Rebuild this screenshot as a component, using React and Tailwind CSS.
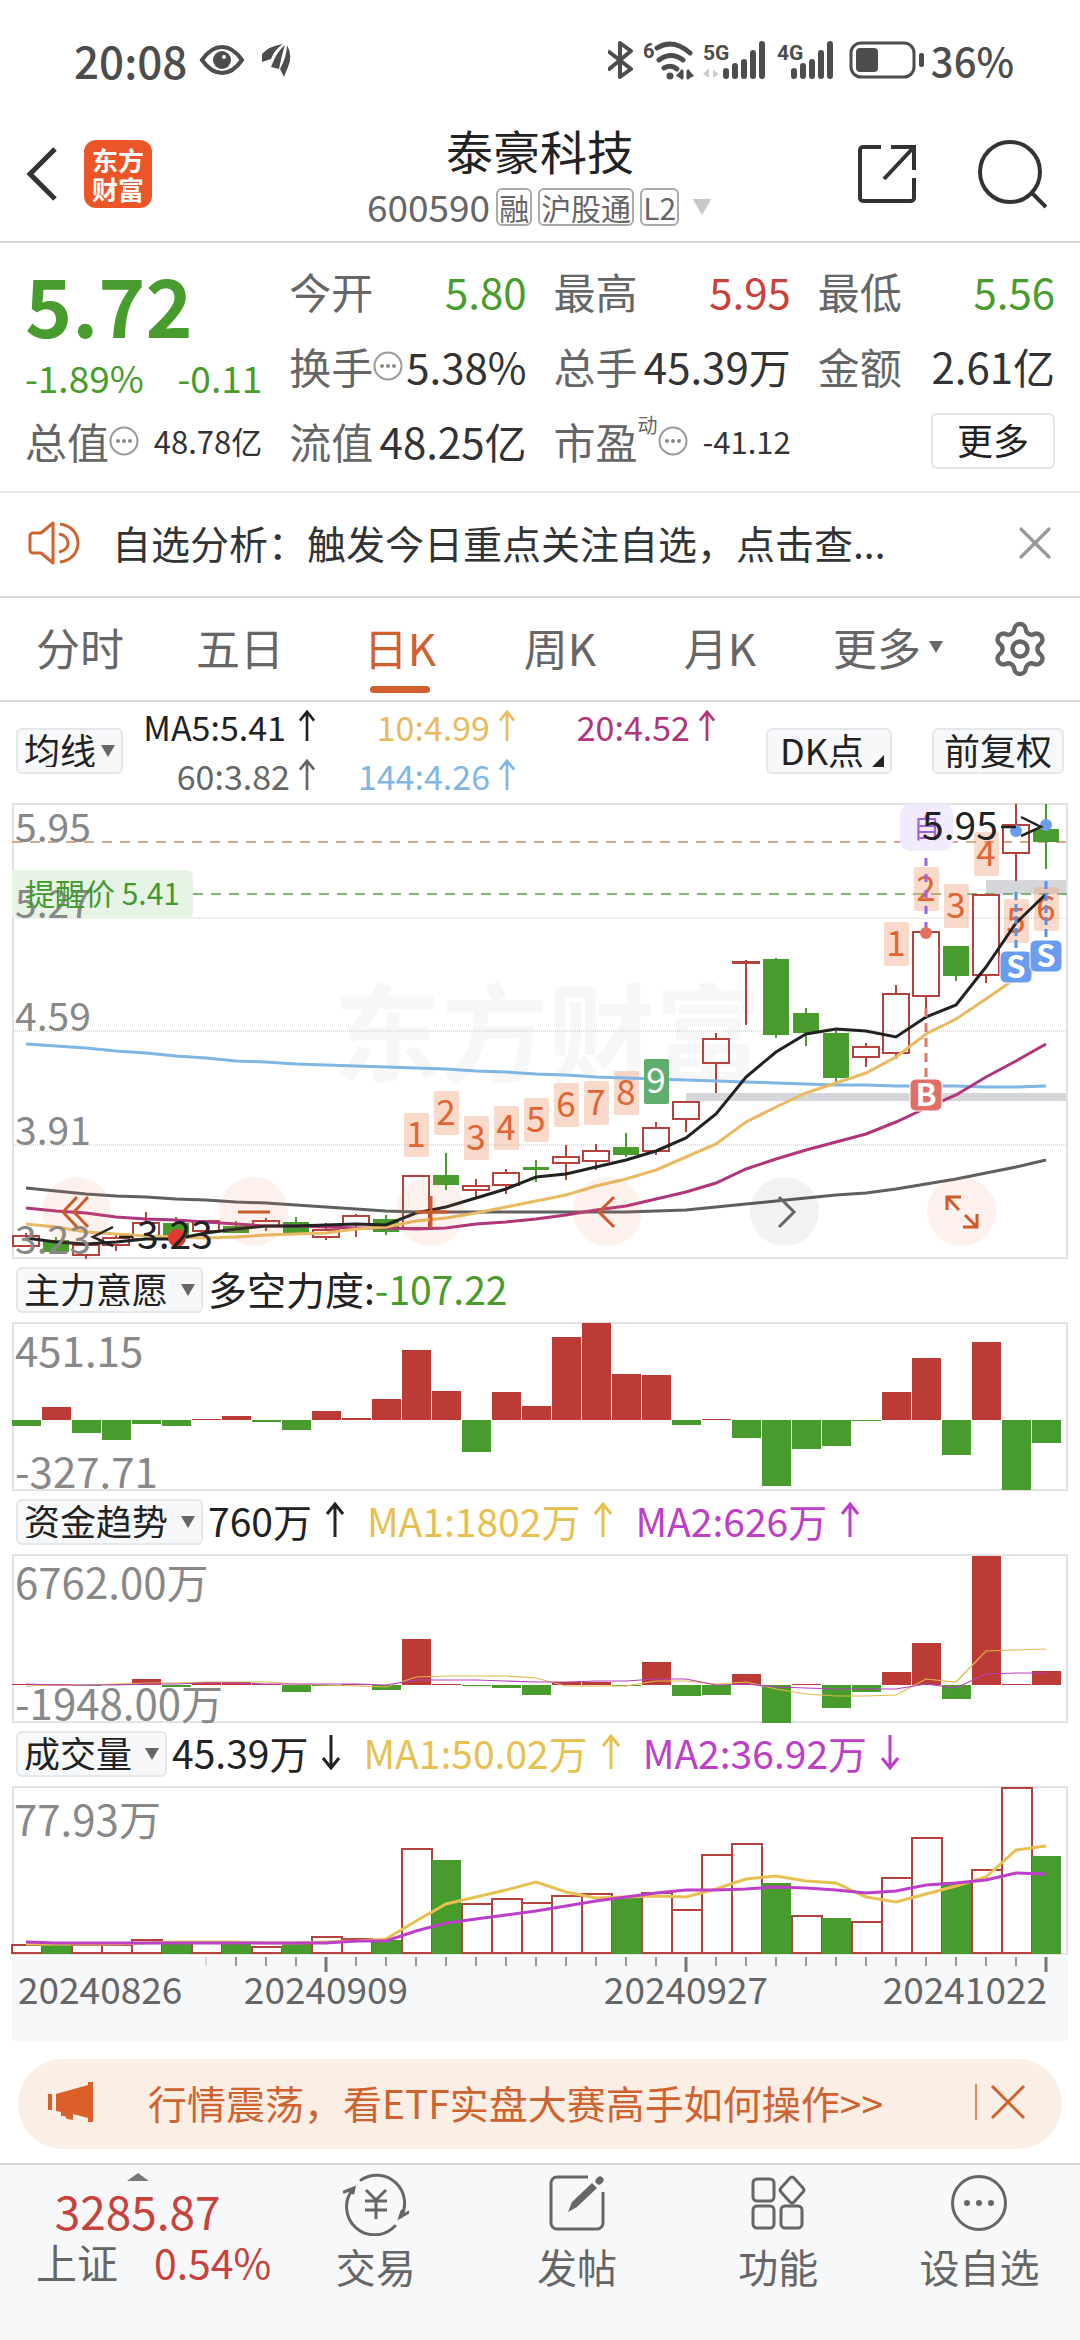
import React from 'react';
import { Settings, X } from 'lucide-react';

// [high, body top, body bottom, low, rising]
const candles = [
    [430, 432, 444, 444, 1], [434, 437, 449, 449, 0], [441, 441, 453, 456, 1], [430, 434, 443, 448, 1],
    [409, 419, 437, 437, 1], [414, 420, 434, 436, 0], [417, 417, 429, 432, 1], [418, 423, 430, 430, 0],
    [415, 417, 424, 428, 1], [414, 419, 430, 432, 0], [420, 426, 435, 437, 1], [411, 412, 422, 434, 1],
    [412, 416, 429, 432, 0], [372, 372, 426, 426, 1], [350, 372, 382, 387, 0], [376, 382, 388, 394, 1],
    [366, 369, 383, 391, 1], [357, 364, 367, 379, 0], [342, 353, 361, 377, 1], [341, 347, 359, 367, 1],
    [330, 344, 352, 354, 0], [319, 324, 349, 352, 1], [298, 298, 317, 329, 1], [230, 235, 261, 290, 1],
    [157, 158, 160, 222, 1], [155, 156, 232, 235, 0], [205, 210, 230, 243, 0], [228, 230, 275, 279, 0],
    [240, 243, 255, 264, 1], [182, 190, 251, 256, 1], [128, 128, 194, 205, 1], [143, 143, 173, 178, 0],
    [91, 91, 173, 180, 1], [1, 21, 51, 78, 1], [1, 26, 39, 66, 0],
];

const averages = [
    { color: '#5f5f5f', data: [385, 388, 391, 393, 394, 396, 397, 399, 400, 402, 404, 406, 408, 409, 409, 409, 409, 409, 409, 409, 409, 408, 407, 404, 401, 398, 395, 392, 390, 386, 381, 376, 370, 364, 357] },
    { color: '#7fb6e4', data: [241, 243, 245, 248, 250, 253, 255, 258, 259, 261, 262, 263, 264, 265, 266, 268, 269, 271, 272, 274, 275, 276, 277, 278, 279, 280, 281, 282, 282, 283, 283, 283, 284, 284, 283] },
    { color: '#b0367c', data: [405, 408, 410, 414, 416, 417, 419, 421, 423, 423, 424, 425, 425, 426, 425, 421, 419, 416, 412, 407, 403, 396, 389, 380, 366, 356, 347, 339, 331, 319, 305, 292, 274, 258, 241] },
    { color: '#e8ba62', data: [421, 424, 429, 431, 433, 434, 435, 434, 432, 431, 430, 426, 424, 418, 415, 410, 404, 398, 392, 383, 376, 367, 354, 341, 319, 304, 290, 280, 270, 254, 231, 216, 196, 175, 162] },
    { color: '#222222', data: [435, 439, 441, 439, 436, 436, 430, 426, 423, 423, 422, 421, 422, 410, 404, 395, 386, 374, 371, 364, 357, 348, 335, 311, 274, 249, 231, 226, 228, 234, 214, 202, 164, 120, 91] },
];

// [candle index, top, label]
const counts = [
    [13, 310, '1'], [14, 288, '2'], [15, 313, '3'], [16, 303, '4'], [17, 295, '5'], [18, 280, '6'],
    [19, 278, '7'], [20, 268, '8'], [29, 119, '1'], [30, 64, '2'], [31, 81, '3'], [32, 29, '4'],
    [33, 96, '5'], [34, 84, '6'],
];

const force = [-6, 13, -13, -20, -4, -6, 1, 4, -2, -10, 9, 2, 21, 70, 29, -32, 28, 14, 83, 97, 46, 45, -5, 1, -18, -66, -29, -26, -1, 28, 62, -35, 78, -70, -23];

const funds = [1, 1, -1, 1, 6, -2, 3, 3, 1, -7, -1, 1, -5, 46, 1, -1, -3, -10, 3, 3, -1, 23, -11, -10, 11, -38, 1, -23, -7, 13, 42, -14, 129, 1, 14];
const fundsMa1 = [132, 131, 131, 130, 129, 129, 128, 128, 128, 130, 131, 132, 133, 123, 122, 122, 122, 124, 132, 132, 132, 127, 127, 130, 128, 135, 140, 142, 142, 141, 125, 128, 97, 96, 95];
const fundsMa2 = [130, 131, 131, 131, 130, 130, 129, 129, 130, 130, 130, 130, 131, 126, 126, 126, 127, 128, 128, 127, 127, 125, 125, 131, 130, 133, 134, 135, 135, 135, 130, 134, 120, 119, 119];

// [bar top, rising]
const volume = [
    [158, 1], [159, 0], [158, 1], [158, 1], [153, 1], [158, 0], [155, 1], [157, 0], [160, 1], [158, 0], [150, 1], [152, 1],
    [154, 0], [62, 1], [74, 0], [117, 1], [112, 1], [116, 1], [109, 1], [107, 1], [111, 0], [106, 1], [123, 1], [68, 1],
    [57, 1], [97, 0], [129, 1], [132, 0], [135, 1], [91, 1], [51, 1], [96, 0], [83, 1], [1, 1], [70, 0],
];
const volumeMa1 = [158, 158, 158, 158, 157, 156, 156, 156, 157, 157, 156, 155, 153, 135, 118, 111, 104, 96, 106, 112, 111, 110, 111, 103, 93, 90, 95, 97, 111, 116, 108, 100, 91, 64, 60];
const volumeMa2 = [156, 157, 157, 157, 157, 157, 157, 157, 157, 157, 157, 155, 155, 145, 137, 133, 129, 125, 120, 115, 111, 107, 104, 104, 103, 101, 102, 104, 107, 105, 99, 97, 94, 87, 88];

const center = (i) => 14 + i * 30;
const points = (data) => data.map((y, i) => `${center(i)},${y}`).join(' ');

function Frame({ height }) {
    return <rect x="1" y="1" width="1054" height={height - 2} fill="none" stroke="#e2e2e2" strokeWidth="2" />;
}

function Arrow({ down, small }) {
    return (
        <svg viewBox="0 0 20 36" className={small ? 'h-8 w-[18px]' : 'h-9 w-5'} fill="none" stroke="currentColor" strokeWidth="3">
            {down ? <path d="M10 1V34M2 24l8 10 8-10" /> : <path d="M10 35V2M2 12l8-10 8 10" />}
        </svg>
    );
}

function Dots() {
    return (
        <svg viewBox="0 0 30 30" className="size-[30px] shrink-0">
            <circle cx="15" cy="15" r="13.5" fill="none" stroke="#999" strokeWidth="2" />
            <g fill="#888"><circle cx="9" cy="15" r="2" /><circle cx="15" cy="15" r="2" /><circle cx="21" cy="15" r="2" /></g>
        </svg>
    );
}

function Triangle({ className }) {
    return <svg viewBox="0 0 14 12" className={className} fill="currentColor"><path d="M0 0h14L7 12z" /></svg>;
}

function Picker({ label, tight }) {
    return (
        <label className="relative flex h-[46px] shrink-0 items-center rounded-md border-2 border-[#e6e7ea] bg-[#f7f8fa] text-[#222]">
            <select aria-label={label} className={`h-full appearance-none bg-transparent pb-1 pl-[6px] text-4xl leading-none outline-none ${tight ? 'pr-6' : 'pr-8'}`}>
                <option>{label}</option>
            </select>
            <Triangle className="pointer-events-none absolute right-[6px] h-3 w-[14px] text-[#666]" />
        </label>
    );
}

function Stat({ label, value, color = 'text-[#333]', dots, sup, small }) {
    return (
        <div className="flex items-center justify-between whitespace-nowrap">
            <span className="flex items-center text-[#666]">
                {label}
                {sup && <span className="mb-8 text-xl leading-none">{sup}</span>}
                {dots && <Dots />}
            </span>
            <span className={`${color} ${small ? 'text-[31px]' : ''}`}>{value}</span>
        </div>
    );
}

function StatusBar() {
    return (
        <div className="flex h-[120px] items-center justify-between pr-[66px] pl-[74px] text-[#4d4d4d]">
            <div className="flex items-center">
                <span className="text-[44px] font-medium">20:08</span>
                <svg viewBox="0 0 46 32" className="ml-3 h-8 w-[46px]">
                    <path d="M3 16Q12 3 23 3t20 13Q34 29 23 29T3 16z" fill="none" stroke="currentColor" strokeWidth="4" />
                    <circle cx="23" cy="16" r="9" fill="currentColor" />
                    <circle cx="25" cy="13" r="2" fill="#fff" />
                </svg>
                <svg viewBox="0 0 30 36" className="ml-4 h-9 w-[30px]" fill="currentColor">
                    <path d="M1 12Q8 4 22 2 13 8 10 17L1 20z" />
                    <path d="M24 3Q16 9 10 25l8 2Q21 12 24 3z" />
                    <path d="M26 3q6 11 1 22l-4 10-4-8Q26 14 26 3z" />
                </svg>
            </div>
            <div className="flex items-center">
                <svg viewBox="0 0 26 38" className="h-[38px] w-[26px]" fill="none" stroke="currentColor" strokeWidth="4" strokeLinejoin="round">
                    <path d="M0 10l23 18-11 8V2l11 8L0 29" />
                </svg>
                <svg viewBox="0 0 52 40" className="ml-[9px] h-10 w-[52px] overflow-visible" fill="none" stroke="currentColor" strokeWidth="5" strokeLinecap="round">
                    <text x="0" y="18" fontSize="20" fontFamily="Roboto" fontWeight="700" fill="currentColor" stroke="none">6</text>
                    <path d="M14 8q16-10 33 5M16 20q12-9 24 0M21 28q7-4 13 1" />
                    <circle cx="27" cy="36" r="3.5" fill="currentColor" stroke="none" />
                    <path d="M33 36l6-7v10M51 36l-6 3v-10z" fill="currentColor" stroke="none" />
                    <path d="M39 31v7M45 31v7" strokeWidth="3" />
                </svg>
                <svg viewBox="0 0 64 40" className="ml-2 h-10 w-16 overflow-visible" fill="none" stroke="currentColor" strokeWidth="6" strokeLinecap="round">
                    <text x="0" y="20" fontSize="21" fontFamily="Roboto" fontWeight="700" fill="currentColor" stroke="none">5G</text>
                    <path d="M0 34l6-6v10M16 34l-6-4v8z" fill="#ccc" stroke="none" />
                    <path d="M23 31v5M32 26v10M41 22v14M50 13v23M59 4v32" />
                </svg>
                <svg viewBox="0 0 58 40" className="ml-[10px] h-10 w-[58px] overflow-visible" fill="none" stroke="currentColor" strokeWidth="6" strokeLinecap="round">
                    <text x="0" y="20" fontSize="21" fontFamily="Roboto" fontWeight="700" fill="currentColor" stroke="none">4G</text>
                    <path d="M17 31v5M26 26v10M35 22v14M44 13v23M53 4v32" />
                </svg>
                <svg viewBox="0 0 76 38" className="ml-[14px] h-[38px] w-[76px]">
                    <rect x="2" y="2" width="63" height="34" rx="10" fill="none" stroke="currentColor" strokeWidth="3" />
                    <rect x="7" y="7" width="22" height="24" rx="4" fill="currentColor" />
                    <rect x="70" y="12" width="5" height="14" rx="2" fill="currentColor" />
                </svg>
                <span className="ml-[6px] text-[40px] font-medium">36%</span>
            </div>
        </div>
    );
}

function TitleBar() {
    return (
        <header className="grid h-[123px] grid-cols-[1fr_auto_1fr] items-center border-b-2 border-[#d9d9d9] px-[26px] pb-[14px]">
            <div className="flex items-center gap-[26px]">
                <button aria-label="返回">
                    <svg viewBox="0 0 32 54" className="h-[54px] w-8" fill="none" stroke="#333" strokeWidth="5"><path d="M29 2L4 27l25 25" /></svg>
                </button>
                <div className="flex size-[68px] flex-col items-center justify-center rounded-xl bg-[#ec5528] text-[26px] leading-[29px] font-bold text-white">
                    <span>东方</span>
                    <span>财富</span>
                </div>
            </div>
            <div className="flex flex-col items-center gap-[10px]">
                <h1 className="text-[47px] leading-[56px] text-[#222]">泰豪科技</h1>
                <div className="flex h-[38px] items-center gap-[6px] text-[30px] leading-none text-[#666]">
                    <span className="text-[37px]">600590</span>
                    <span className="flex h-[38px] items-center rounded-md border-2 border-[#aaa] px-px">融</span>
                    <span className="flex h-[38px] items-center rounded-md border-2 border-[#aaa] px-px">沪股通</span>
                    <span className="flex h-[38px] items-center rounded-md border-2 border-[#aaa] px-px">L2</span>
                    <Triangle className="ml-[6px] h-4 w-[22px] text-[#c8c8c8]" />
                </div>
            </div>
            <div className="flex items-center justify-end gap-[60px] pr-[7px]">
                <button aria-label="分享">
                    <svg viewBox="0 0 60 60" className="size-[60px]" fill="none" stroke="#333" strokeWidth="4">
                        <path d="M24 3H6a3 3 0 0 0-3 3v48a3 3 0 0 0 3 3h48a3 3 0 0 0 3-3V34M34 3h23v23M57 3L27 35" />
                    </svg>
                </button>
                <button aria-label="搜索">
                    <svg viewBox="0 0 70 70" className="size-[70px]" fill="none" stroke="#333" strokeWidth="4">
                        <circle cx="33" cy="33" r="30" /><path d="M55 54l14 14" />
                    </svg>
                </button>
            </div>
        </header>
    );
}

function Quote() {
    return (
        <section className="grid grid-cols-4 grid-rows-[75px_75px_75px] gap-x-[27px] border-b-2 border-[#e6e6e6] px-[25px] pt-[10px] pb-[13px] text-[42px] leading-none">
            <div className="row-span-2 flex flex-col gap-[6px] text-[#489c2d]">
                <span className="mt-2 text-[80px] leading-[84px] font-bold">5.72</span>
                <div className="flex h-[54px] items-center justify-between text-[37px] whitespace-nowrap">
                    <span>-1.89%</span>
                    <span>-0.11</span>
                </div>
            </div>
            <Stat label="今开" value="5.80" color="text-[#489c2d]" />
            <Stat label="最高" value="5.95" color="text-[#c8413b]" />
            <Stat label="最低" value="5.56" color="text-[#489c2d]" />
            <Stat label="换手" value="5.38%" dots />
            <Stat label="总手" value="45.39万" />
            <Stat label="金额" value="2.61亿" />
            <Stat label="总值" value="48.78亿" dots small />
            <Stat label="流值" value="48.25亿" />
            <Stat label="市盈" value="-41.12" sup="动" dots small />
            <div className="flex items-center justify-end">
                <button className="h-14 w-[124px] rounded-md border-2 border-[#e5e5e5] pb-1 text-4xl leading-none text-[#222]">更多</button>
            </div>
        </section>
    );
}

function Notice() {
    return (
        <div className="flex h-[105px] items-center border-b-2 border-[#d9d9d9] pr-[17px] pb-1 pl-7">
            <svg viewBox="0 0 54 44" className="h-11 w-[54px]" fill="none" stroke="#cf6330" strokeWidth="3">
                <path d="M25 2v40L13 32H5a3 3 0 0 1-3-3V15a3 3 0 0 1 3-3h8z" strokeLinejoin="round" />
                <path d="M32 3c24 3 24 35 0 38M31 13c12 2 12 16 0 18" />
            </svg>
            <a href="#analysis" className="ml-[30px] flex-1 text-[39px] leading-none text-[#333]">自选分析：触发今日重点关注自选，点击查...</a>
            <button aria-label="关闭"><X size={56} strokeWidth={1.4} color="#999" /></button>
        </div>
    );
}

function Tabs() {
    return (
        <nav className="grid h-[104px] grid-cols-[4fr_4fr_4fr_4fr_4fr_4fr_3fr] border-b-2 border-[#d9d9d9] text-[44px] leading-none text-[#666]">
            {['分时', '五日', '日K', '周K', '月K'].map((t) => (
                <button key={t} className={`relative pb-1 ${t === '日K' ? 'text-[#d1602f]' : ''}`}>
                    {t}
                    {t === '日K' && <span className="absolute bottom-[7px] left-1/2 h-[7px] w-[60px] -translate-x-1/2 rounded-sm bg-[#d1602f]" />}
                </button>
            ))}
            <button className="flex items-center justify-center gap-2 pb-1 pl-4">
                更多
                <Triangle className="h-3 w-[14px]" />
            </button>
            <button aria-label="设置" className="flex items-center justify-center">
                <Settings size={60} strokeWidth={1.8} />
            </button>
        </nav>
    );
}

function Averages() {
    return (
        <div className="flex h-[101px] items-center pr-4 pb-1 pl-4">
            <Picker label="均线" tight />
            <div className="grid flex-1 grid-cols-[193px_200px_200px] text-[34px] leading-[49px] whitespace-nowrap">
                <span className="flex items-center justify-end gap-3 text-[#222]">MA5:5.41<Arrow small /></span>
                <span className="flex items-center justify-end gap-2 text-[#e8ba62]">10:4.99<Arrow small /></span>
                <span className="flex items-center justify-end gap-2 text-[#b0367c]">20:4.52<Arrow small /></span>
                <span className="flex items-center justify-end gap-2 text-[#666]">60:3.82<Arrow small /></span>
                <span className="flex items-center justify-end gap-2 text-[#7fb6e4]">144:4.26<Arrow small /></span>
            </div>
            <button className="flex h-[46px] w-[126px] items-center rounded-md border-2 border-[#e6e7ea] bg-[#f7f8fa] pb-1 pl-3 text-4xl leading-none whitespace-nowrap text-[#222]">
                DK点
                <svg viewBox="0 0 12 12" className="mt-6 ml-2 size-3 shrink-0" fill="currentColor"><path d="M12 0v12H0z" /></svg>
            </button>
            <button className="ml-10 h-[46px] w-[132px] rounded-md border-2 border-[#e6e7ea] bg-[#f7f8fa] pb-1 text-4xl leading-none text-[#222]">前复权</button>
        </div>
    );
}

function RoundButton({ label, gray, children }) {
    return (
        <button aria-label={label} className={`flex size-[69px] items-center justify-center rounded-full ${gray ? 'bg-black/5 text-[#666]' : 'bg-[#e07a48]/10 text-[#cc5a2a]'}`}>
            <svg viewBox="0 0 34 34" className="size-[34px]" fill="none" stroke="currentColor" strokeWidth="3">{children}</svg>
        </button>
    );
}

function Badge({ x, y, text, color }) {
    return (
        <>
            <rect x={x - 16} y={y} width="32" height="32" rx="6" fill={color} stroke="#fff" strokeWidth="1" />
            <text x={x} y={y + 27} fontSize="31" fontWeight="700" fill="#fff" textAnchor="middle">{text}</text>
        </>
    );
}

function CandleChart() {
    return (
        <div className="relative">
            <svg viewBox="0 0 1056 456" className="block h-auto w-full overflow-visible">
                <Frame height={456} />
                <text x="322" y="271" fontSize="107" fontWeight="700" fill="#f7f7f7">东方财富</text>
                {[115, 228, 342].map((y) => <path key={y} d={`M1 ${y}H1055`} stroke="#c4c4c4" strokeDasharray="1 1" />)}
                <rect x="974" y="77" width="80" height="14" fill="#d5d6da" />
                <rect x="674" y="290" width="380" height="8" fill="#d5d6da" />
                <path d="M0 39H1055" stroke="#c58c66" strokeWidth="1.5" strokeDasharray="10 8" />
                <path d="M181 91H1055" stroke="#5ba34c" strokeWidth="1.5" strokeDasharray="10 8" />
                <rect x="888" y="1" width="53" height="47" rx="10" fill="#f2ebfd" />
                <text x="901" y="35" fontSize="27" fill="#9a63e0">自</text>

                {candles.map(([high, top, bottom, low, up], i) => (
                    <g key={i} stroke={up ? '#b5423c' : '#489c2d'} strokeWidth="2" fill={up ? 'none' : '#489c2d'}>
                        <path d={`M${center(i)} ${high}V${top}M${center(i)} ${bottom}V${low}`} />
                        <rect x={center(i) - (up ? 13 : 12)} y={top + 1} width={up ? 26 : 24} height={Math.max(bottom - top - 2, 1)} />
                    </g>
                ))}
                {counts.map(([i, top, n]) => (
                    <g key={i}>
                        <rect x={center(i) - 12} y={top} width="25" height="44" rx="2" fill="#f0a880" fillOpacity="0.42" />
                        <text x={center(i)} y={top + 34} fontSize="35" fill="#df6532" textAnchor="middle">{n}</text>
                    </g>
                ))}

                {averages.map(({ color, data }) => (
                    <polyline key={color} points={points(data)} fill="none" stroke={color} strokeWidth="3" />
                ))}
                <rect x="632" y="256" width="25" height="45" rx="2" fill="#5fae6d" />
                <text x="644" y="290" fontSize="35" fill="#fff" textAnchor="middle">9</text>

                <path d="M914 55V128" stroke="#9a63e0" strokeWidth="3" strokeDasharray="8 8" />
                <path d="M914 205V276" stroke="#e0756a" strokeWidth="3" strokeDasharray="9 6" />
                <circle cx="914" cy="130" r="6" fill="#e56f60" />
                <path d="M1004 89V148M1034 78V136" stroke="#5b8fe6" strokeWidth="3" strokeDasharray="8 4" />
                <Badge x={914} y={276} text="B" color="#e06f66" />
                <Badge x={1004} y={148} text="S" color="#6a9cf2" />
                <Badge x={1034} y={137} text="S" color="#6a9cf2" />
                <circle cx="1004" cy="28" r="6" fill="#6a9cf2" />
                <circle cx="1034" cy="22" r="6" fill="#6a9cf2" />

                <path d="M0 67H175a6 6 0 0 1 6 6V109a6 6 0 0 1-6 6H0z" fill="#e6f3e5" />
                <g fontSize="39" fill="#888">
                    <text x="3" y="39">5.95</text>
                    <text x="3" y="115">5.27</text>
                    <text x="3" y="228">4.59</text>
                    <text x="3" y="342">3.91</text>
                </g>
                <text x="13" y="102" fontSize="30" fill="#43982f">提醒价 5.41</text>
                <circle cx="165" cy="435" r="9" fill="#e03a2c" />
                <g fill="none" stroke="#222" strokeWidth="2.5">
                    <path d="M101 424L81 434l20 9M107 434h14M989 24h15M1009 14l20 10-20 9" />
                </g>
                <text x="125" y="446" fontSize="39" fill="#222">3.23</text>
                <text x="3" y="451" fontSize="39" fill="#888">3.23</text>
                <text x="910" y="37" fontSize="39" fill="#222">5.95</text>
            </svg>
            <div className="absolute inset-x-0 bottom-[13px] flex justify-between pr-[72px] pl-[30px]">
                <RoundButton label="最早"><path d="M17 2L3 17l14 15M28 2L14 17l14 15" /></RoundButton>
                <RoundButton label="缩小"><path d="M1 17h32" /></RoundButton>
                <RoundButton label="放大"><path d="M1 17h32M17 1v32" /></RoundButton>
                <RoundButton label="向左"><path d="M23 2L8 17l15 15" /></RoundButton>
                <RoundButton label="向右" gray><path d="M11 2l15 15-15 15" /></RoundButton>
                <RoundButton label="全屏"><path d="M2 15V2h14M3 3l11 12M32 19v13H18M31 31L20 20" /></RoundButton>
            </div>
        </div>
    );
}

function SubHeader({ label, children }) {
    return (
        <div className="flex h-[63px] items-center gap-[5px] pb-[1px] pl-1 text-[39px] leading-none whitespace-nowrap">
            <Picker label={label} />
            <div className="flex items-center gap-[22px] pb-1">{children}</div>
        </div>
    );
}

function Reading({ className, down, children }) {
    return <span className={`flex items-center gap-[13px] ${className}`}>{children}<Arrow down={down} /></span>;
}

function Bars({ data, base }) {
    return data.map((v, i) => (
        <rect key={i} x={i * 30} y={v > 0 ? base - v : base} width="29" height={Math.abs(v)} fill={v > 0 ? '#bd3b36' : '#489c2d'} />
    ));
}

function Indicators() {
    return (
        <>
            <SubHeader label="主力意愿">
                <span className="text-[#222]">多空力度:<span className="text-[#489c2d]">-107.22</span></span>
            </SubHeader>
            <svg viewBox="0 0 1056 169" className="block h-auto w-full overflow-visible">
                <Frame height={169} />
                <Bars data={force} base={98} />
                <text x="3" y="45" fontSize="42" fill="#888">451.15</text>
                <text x="3" y="166" fontSize="42" fill="#888">-327.71</text>
            </svg>

            <SubHeader label="资金趋势">
                <Reading className="text-[#222]">760万</Reading>
                <Reading className="text-[#e6c152]">MA1:1802万</Reading>
                <Reading className="text-[#bd3fc8]">MA2:626万</Reading>
            </SubHeader>
            <svg viewBox="0 0 1056 169" className="block h-auto w-full overflow-visible">
                <Frame height={169} />
                <Bars data={funds} base={131} />
                <polyline points={points(fundsMa1)} fill="none" stroke="#dfb84a" strokeWidth="1.2" />
                <polyline points={points(fundsMa2)} fill="none" stroke="#b53fc0" strokeWidth="1.2" />
                <text x="3" y="45" fontSize="42" fill="#888">6762.00万</text>
                <text x="3" y="166" fontSize="42" fill="#888">-1948.00万</text>
            </svg>

            <SubHeader label="成交量">
                <Reading className="text-[#222]" down>45.39万</Reading>
                <Reading className="text-[#e6c152]">MA1:50.02万</Reading>
                <Reading className="text-[#bd3fc8]" down>MA2:36.92万</Reading>
            </SubHeader>
            <svg viewBox="0 0 1056 169" className="block h-auto w-full overflow-visible">
                <Frame height={169} />
                {volume.map(([top, up], i) => (up
                    ? <rect key={i} x={i * 30} y={top + 1} width="30" height={166 - top} fill="#fff" stroke="#b5423c" strokeWidth="2" />
                    : <rect key={i} x={i * 30} y={top} width="29" height={168 - top} fill="#489c2d" />
                ))}
                <polyline points={points(volumeMa1)} fill="none" stroke="#e6c152" strokeWidth="3" />
                <polyline points={points(volumeMa2)} fill="none" stroke="#bd3fc8" strokeWidth="3" />
                <text x="2" y="50" fontSize="42" fill="#888">77.93万</text>
            </svg>
            <svg viewBox="0 0 1056 84" className="mt-[2px] block h-auto w-full bg-[#f7f8fa]">
                {candles.map((_, i) => {
                    if (i < 6) return null;
                    const major = i % 12 === 10;
                    return <path key={i} d={`M${center(i)} 0V${major ? 15 : 9}`} stroke={i === 6 ? '#ccc' : '#777'} strokeWidth={major ? 3 : 1.5} />;
                })}
                <g fontSize="37" fill="#666">
                    <text x="6" y="47">20240826</text>
                    <text x="314" y="47" textAnchor="middle">20240909</text>
                    <text x="674" y="47" textAnchor="middle">20240927</text>
                    <text x="1035" y="47" textAnchor="end">20241022</text>
                </g>
            </svg>
        </>
    );
}

function Banner() {
    return (
        <div className="mx-[18px] mt-[18px] mb-[14px] flex h-[90px] items-center rounded-full bg-[#fbeee5] pr-[36px] pb-1 pl-[30px] text-[#cf6330]">
            <svg viewBox="0 0 46 40" className="h-10 w-[46px]" fill="#dc5f29">
                <path d="M0 12h4v16H0zM8 12L40 3V0h5v40h-5v-4l-15-4v6l-6-1-2-3h-4v-4l-5-1z" />
            </svg>
            <a href="#etf" className="ml-[54px] flex-1 text-[39px] leading-none">行情震荡，看ETF实盘大赛高手如何操作&gt;&gt;</a>
            <span className="mr-[13px] h-9 w-[2px] bg-[#d98a63]" />
            <button aria-label="关闭">
                <svg viewBox="0 0 36 36" className="size-9" fill="none" stroke="#cf6330" strokeWidth="3"><path d="M2 2l32 32M34 2L2 34" /></svg>
            </button>
        </div>
    );
}

function NavItem({ label, children }) {
    return (
        <button className="flex flex-col items-center gap-[10px] pt-[5px]">
            <svg viewBox="0 0 66 66" className="size-[66px]" fill="none" stroke="#666" strokeWidth="3">{children}</svg>
            <span className="text-[40px] leading-[40px]">{label}</span>
        </button>
    );
}

function BottomNav() {
    return (
        <nav className="grid h-[177px] grid-cols-[275fr_201fr_201fr_201fr_201fr] items-start border-t-2 border-[#d3d5d8] bg-[#f7f8fa] text-[#666]">
            <a href="#index" className="flex flex-col items-center pt-2">
                <svg viewBox="0 0 22 8" className="h-2 w-[22px]" fill="#777"><path d="M11 0l11 8H0z" /></svg>
                <span className="mt-[6px] text-[46px] leading-[46px] text-[#c8413b]">3285.87</span>
                <span className="mt-2 flex gap-9 pl-8 text-[41px] leading-[40px]">上证<span className="text-[#c8413b]">0.54%</span></span>
            </a>
            <NavItem label="交易">
                <path d="M18 10A28 28 0 0 1 58 47M52 56A28 28 0 0 1 10 19M1 22l10-4-1 5M66 42l-9 5 2-6" strokeLinecap="round" />
                <path d="M23 20l10 10 10-10M22 31h22M22 40h22M33 30v19" />
            </NavItem>
            <NavItem label="发帖">
                <path d="M44 7H13a6 6 0 0 0-6 6v40a6 6 0 0 0 6 6h40a6 6 0 0 0 6-6V22" />
                <path d="M24 42l4-10 20-19 5 5-20 19z" fill="#666" stroke="none" />
                <path d="M55 11l1-1" strokeWidth="7" strokeLinecap="round" />
            </NavItem>
            <NavItem label="功能">
                <rect x="8" y="9" width="21" height="22" rx="4" />
                <rect x="8" y="36" width="21" height="22" rx="4" />
                <rect x="36" y="36" width="21" height="22" rx="4" />
                <path d="M45 8q2-2 4 0l9 10q2 2 0 4l-9 10q-2 2-4 0l-9-10q-2-2 0-4z" />
            </NavItem>
            <NavItem label="设自选">
                <circle cx="33" cy="33" r="26.5" />
                <g fill="#666" stroke="none"><circle cx="21" cy="33" r="3" /><circle cx="33" cy="33" r="3" /><circle cx="45" cy="33" r="3" /></g>
            </NavItem>
        </nav>
    );
}

function App() {
    return (
        <div className="min-h-screen bg-white font-['Noto_Sans_CJK_SC',sans-serif]">
            <StatusBar />
            <TitleBar />
            <Quote />
            <Notice />
            <Tabs />
            <Averages />
            <main className="mx-3">
                <CandleChart />
                <Indicators />
            </main>
            <Banner />
            <BottomNav />
        </div>
    );
}

export default App;
